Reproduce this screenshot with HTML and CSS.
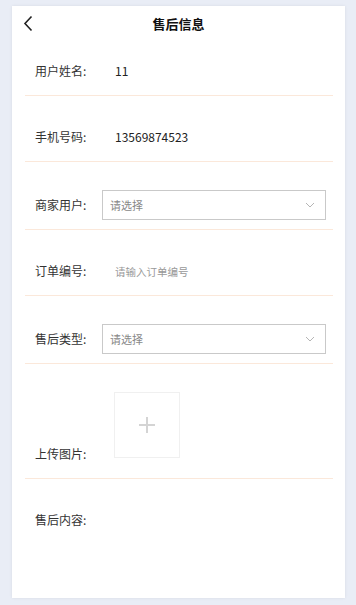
FILE: index.html
```html
<!DOCTYPE html>
<html lang="zh-CN">
<head>
    <meta charset="UTF-8">
    <meta name="viewport" content="width=device-width, initial-scale=1.0">
    <title>售后信息</title>
    <link rel="stylesheet" href="styles.css">
</head>
<body>
    <div class="card">
        <div class="header">
            <a class="back" href="#">
                <svg width="10" height="17" viewBox="0 0 10 17">
                    <path d="M8.5 1.5 L2 8.5 L8.5 15.5" fill="none" stroke="#222" stroke-width="1.6"/>
                </svg>
            </a>
            <h1>售后信息</h1>
            <span></span>
        </div>

        <div class="row row-first">
            <label>用户姓名:</label>
            <span class="value">11</span>
        </div>
        <div class="row">
            <label>手机号码:</label>
            <span class="value">13569874523</span>
        </div>
        <div class="row row-select">
            <label>商家用户:</label>
            <div class="select">
                <span>请选择</span>
                <svg width="10" height="6" viewBox="0 0 10 6">
                    <path d="M1 1 L5 5 L9 1" fill="none" stroke="#b5b5b5" stroke-width="1"/>
                </svg>
            </div>
        </div>
        <div class="row">
            <label>订单编号:</label>
            <input class="text-input" type="text" placeholder="请输入订单编号">
        </div>
        <div class="row row-select">
            <label>售后类型:</label>
            <div class="select">
                <span>请选择</span>
                <svg width="10" height="6" viewBox="0 0 10 6">
                    <path d="M1 1 L5 5 L9 1" fill="none" stroke="#b5b5b5" stroke-width="1"/>
                </svg>
            </div>
        </div>
        <div class="row row-upload">
            <label>上传图片:</label>
            <div class="upload">
                <svg width="16" height="16" viewBox="0 0 16 16">
                    <path d="M8 0 V16 M0 8 H16" stroke="#d4d4d4" stroke-width="2"/>
                </svg>
            </div>
        </div>
        <div class="row row-last">
            <label>售后内容:</label>
        </div>
    </div>
</body>
</html>
```

FILE: styles.css
```css
body {
    margin: 0;
    background: #e9edf6;
    font-family: "Noto Sans CJK SC", "Noto Sans", sans-serif;
    color: #333;
}
.card {
    margin: 6px 11px 7px 12px;
    height: 592px;
    background: #fff;
    box-shadow: 0 0 3px rgba(0, 0, 0, 0.08);
}
.header {
    height: 34px;
    display: grid;
    grid-template-columns: 44px 1fr 44px;
    align-items: center;
}
.back {
    display: flex;
    padding-left: 11px;
    padding-top: 1px;
}
.header h1 {
    margin: 0;
    text-align: center;
    font-size: 13px;
    font-weight: bold;
    color: #111;
}
.row {
    margin: 0 12px 0 13px;
    padding: 26px 0 9px 10px;
    border-bottom: 1px solid #fbe8da;
    display: flex;
    align-items: center;
    line-height: 30px;
}
.row-first {
    padding-top: 16px;
}
.row-select {
    padding-top: 28px;
}
.row-upload {
    padding-top: 28px;
    padding-bottom: 20px;
    align-items: flex-end;
}
.row-upload label {
    line-height: 14px;
    margin-bottom: -3px;
}
.row-last {
    border-bottom: none;
}
.row label {
    width: 67px;
    flex-shrink: 0;
    font-size: 12px;
    color: #333;
}
.value {
    font-size: 12px;
    color: #222;
    padding-left: 13px;
}
.select {
    width: 205px;
    height: 28px;
    border: 1px solid #c9c9c9;
    display: flex;
    align-items: center;
    justify-content: space-between;
    padding: 0 10px 0 7px;
}
.select span {
    font-size: 11px;
    color: #888;
}
.text-input {
    border: none;
    outline: none;
    padding: 0 0 0 13px;
    font-family: inherit;
    font-size: 10.5px;
    color: #333;
    width: 200px;
}
.text-input::placeholder {
    color: #999;
}
.upload {
    margin-left: 12px;
    width: 64px;
    height: 64px;
    border: 1px solid #f0f0f0;
    display: flex;
    align-items: center;
    justify-content: center;
}
```
